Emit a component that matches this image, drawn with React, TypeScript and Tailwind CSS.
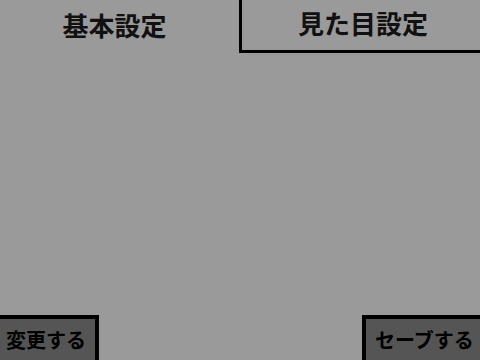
export default function App() {
  const font = { fontFamily: '"Noto Sans CJK JP", "Noto Sans", sans-serif' };
  return (
    <div
      className="flex h-[360px] w-[480px] flex-col justify-between overflow-hidden bg-[#9a9a9a] text-[#111]"
      style={font}
    >
      <div className="flex h-[53px]">
        <button className="flex w-[239px] items-center justify-center pb-[4px] text-[26px] font-bold">
          <span className="mr-[10px]">基本設定</span>
        </button>
        <button className="flex flex-1 items-center justify-center border-b-[3px] border-l-[3px] border-black pb-[6px] pl-[4px] text-[26px] font-bold">
          見た目設定
        </button>
      </div>
      <div className="flex items-end justify-between">
        <button className="flex h-[45px] w-[99px] items-center justify-start border-r-[4px] border-t-[4px] border-black bg-[#555555] pl-[6px] text-[20px] font-bold text-black">
          変更する
        </button>
        <button className="flex h-[45px] w-[118px] items-center justify-start border-l-[4px] border-t-[4px] border-black bg-[#555555] pl-[9px] text-[20px] font-bold text-black">
          セーブする
        </button>
      </div>
    </div>
  );
}
